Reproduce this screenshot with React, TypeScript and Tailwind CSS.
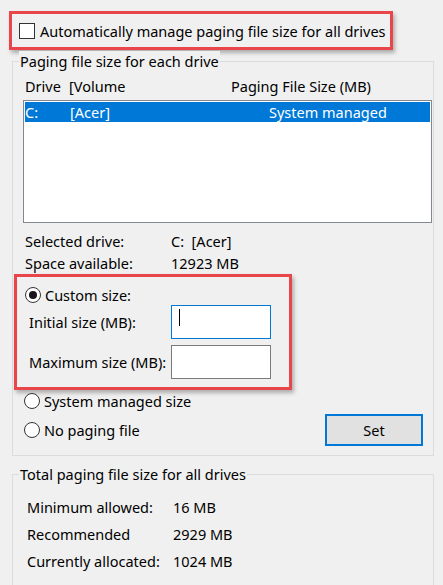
import type { ReactNode } from 'react'

function Radio({ checked }: { checked?: boolean }) {
    return (
        <span className="flex h-[16px] w-[16px] shrink-0 items-center justify-center rounded-full border border-[#333333] bg-white">
            {checked && <span className="h-[8px] w-[8px] rounded-full bg-[#1c141c]" />}
        </span>
    )
}

function Group({ title, className, children }: { title: string; className: string; children: ReactNode }) {
    return (
        <div className={`relative ml-[12px] w-[422px] border border-[#dcdcdc] ${className}`}>
            <span className="absolute left-[6px] top-[-11px] bg-[#f0f0f0] px-[1px] leading-[20px]">{title}</span>
            {children}
        </div>
    )
}

function InfoRow({ label, value, className = '' }: { label: string; value: string; className?: string }) {
    return (
        <div className={`flex h-[20px] items-center ${className}`}>
            <span className="w-[146px]">{label}</span>
            <span>{value}</span>
        </div>
    )
}

export default function App() {
    return (
        <div
            className="h-[585px] w-[443px] overflow-hidden bg-[#f0f0f0] pt-[11px] text-[14.5px] leading-[20px] text-black"
            style={{ fontFamily: '"Noto Sans", "Open Sans", sans-serif' }}
        >
            <div className="ml-[9px] h-[39px] w-[384px] border-[3px] border-[#e8464b] pl-[7px] pt-[7px] shadow-[2px_3px_4px_rgba(0,0,0,0.28)]">
                <label className="flex h-[20px] items-center gap-[5px]">
                    <span className="h-[16px] w-[16px] border border-[#333333] bg-white" />
                    Automatically manage paging file size for all drives
                </label>
            </div>

            <Group title="Paging file size for each drive" className="mt-[11px] pb-[9px]">
                <div className="mt-[14px] flex h-[20px] items-center pl-[12px]">
                    <span className="w-[44px]">Drive</span>
                    <span className="w-[162px]">[Volume</span>
                    <span>Paging File Size (MB)</span>
                </div>
                <div className="ml-[10px] mt-[4px] h-[123px] w-[409px] border border-[#828790] bg-white p-[1px]">
                    <div className="flex h-[20px] items-center bg-[#0078d7] text-white">
                        <span className="w-[45px]">C:</span>
                        <span className="w-[199px]">[Acer]</span>
                        <span>System managed</span>
                    </div>
                </div>

                <InfoRow label="Selected drive:" value="C:  [Acer]" className="mt-[8px] pl-[12px] whitespace-pre" />
                <InfoRow label="Space available:" value="12923 MB" className="mt-[2px] pl-[12px]" />

                <div className="ml-[1px] mt-[1px] h-[116px] w-[278px] border-[3px] border-[#e8464b] pt-[8px] shadow-[2px_3px_4px_rgba(0,0,0,0.28)]">
                    <label className="flex h-[20px] items-center gap-[4px] pl-[8px]">
                        <Radio checked />
                        Custom size:
                    </label>
                    <div className="flex h-[34px] items-center pl-[12px]">
                        <span className="w-[142px]">Initial size (MB):</span>
                        <div className="h-[34px] w-[100px] border border-[#0078d7] bg-white pl-[7px] pt-[3px]">
                            <span className="block h-[17px] w-[1px] bg-black" />
                        </div>
                    </div>
                    <div className="mt-[6px] flex h-[34px] items-center pl-[12px]">
                        <span className="w-[142px]">Maximum size (MB):</span>
                        <div className="h-[34px] w-[100px] border border-[#7a7a7a] bg-white" />
                    </div>
                </div>

                <div className="mt-[1px] flex justify-between pl-[11px] pr-[10px]">
                    <div className="flex flex-col gap-[9px]">
                        <label className="flex h-[20px] items-center gap-[4px]">
                            <Radio />
                            System managed size
                        </label>
                        <label className="flex h-[20px] items-center gap-[4px]">
                            <Radio />
                            No paging file
                        </label>
                    </div>
                    <button
                        type="button"
                        className="mt-[23px] h-[32px] w-[98px] border-2 border-[#0078d7] bg-[#e1e1e1] text-black"
                    >
                        Set
                    </button>
                </div>
            </Group>

            <Group title="Total paging file size for all drives" className="mt-[18px] pb-[40px]">
                <InfoRow label="Minimum allowed:" value="16 MB" className="mt-[22px] pl-[14px]" />
                <InfoRow label="Recommended" value="2929 MB" className="mt-[7px] pl-[14px]" />
                <InfoRow label="Currently allocated:" value="1024 MB" className="mt-[7px] pl-[14px]" />
            </Group>
        </div>
    )
}
